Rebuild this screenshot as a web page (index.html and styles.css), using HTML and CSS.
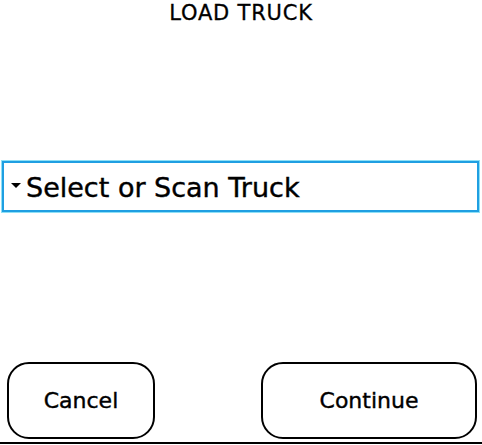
FILE: index.html
```html
<!DOCTYPE html>
<html>
<head>
    <title>Load Truck</title>
    <link rel="stylesheet" href="styles.css">
</head>
<body>
    <div class="screen">
        <div class="title">LOAD TRUCK</div>

        <div class="picker">
            <svg class="picker-arrow" width="10" height="5" viewBox="0 0 10 5">
                <polygon points="0,0 10,0 5,5" fill="#000"/>
            </svg>
            <span class="picker-text">Select or Scan Truck</span>
        </div>

        <div class="actions">
            <button class="btn btn-cancel">Cancel</button>
            <button class="btn btn-continue">Continue</button>
        </div>

        <div class="bottom-line"></div>
    </div>
</body>
</html>
```

FILE: styles.css
```css
body {
    margin: 0;
    background: #fff;
    font-family: "DejaVu Sans", Tahoma, sans-serif;
    color: #000;
}

.screen {
    width: 482px;
    height: 445px;
    overflow: hidden;
}

.title {
    padding-top: 1px;
    font-size: 21px;
    line-height: 24px;
    letter-spacing: 0.8px;
    text-align: center;
    -webkit-text-stroke: 0.3px #000;
}

/* Truck dropdown */
.picker {
    margin: 136px 3px 0 2px;
    box-sizing: border-box;
    height: 51px;
    padding: 10px 0 7px 7px;
    border: 2px solid #1f9fe2;
    box-shadow: 0 0 0 1px #8ee0f6;
    display: flex;
    align-items: center;
}

.picker-arrow {
    margin-bottom: 5px;
    margin-right: 5px;
    flex-shrink: 0;
}

.picker-text {
    font-size: 27px;
    line-height: 30px;
    -webkit-text-stroke: 0.4px #000;
}

/* Buttons */
.actions {
    margin-top: 150px;
    padding: 0 5px 0 7px;
    display: flex;
    justify-content: space-between;
}

.btn {
    height: 77px;
    box-sizing: border-box;
    border: 2px solid #000;
    border-radius: 22px;
    background: #fff;
    font-family: "DejaVu Sans", Tahoma, sans-serif;
    font-size: 22px;
    color: #000;
    padding: 0;
    -webkit-text-stroke: 0.4px #000;
}

.btn-cancel {
    width: 148px;
}

.btn-continue {
    width: 216px;
}

.bottom-line {
    margin-top: 3px;
    height: 2px;
    background: #000;
}
```
